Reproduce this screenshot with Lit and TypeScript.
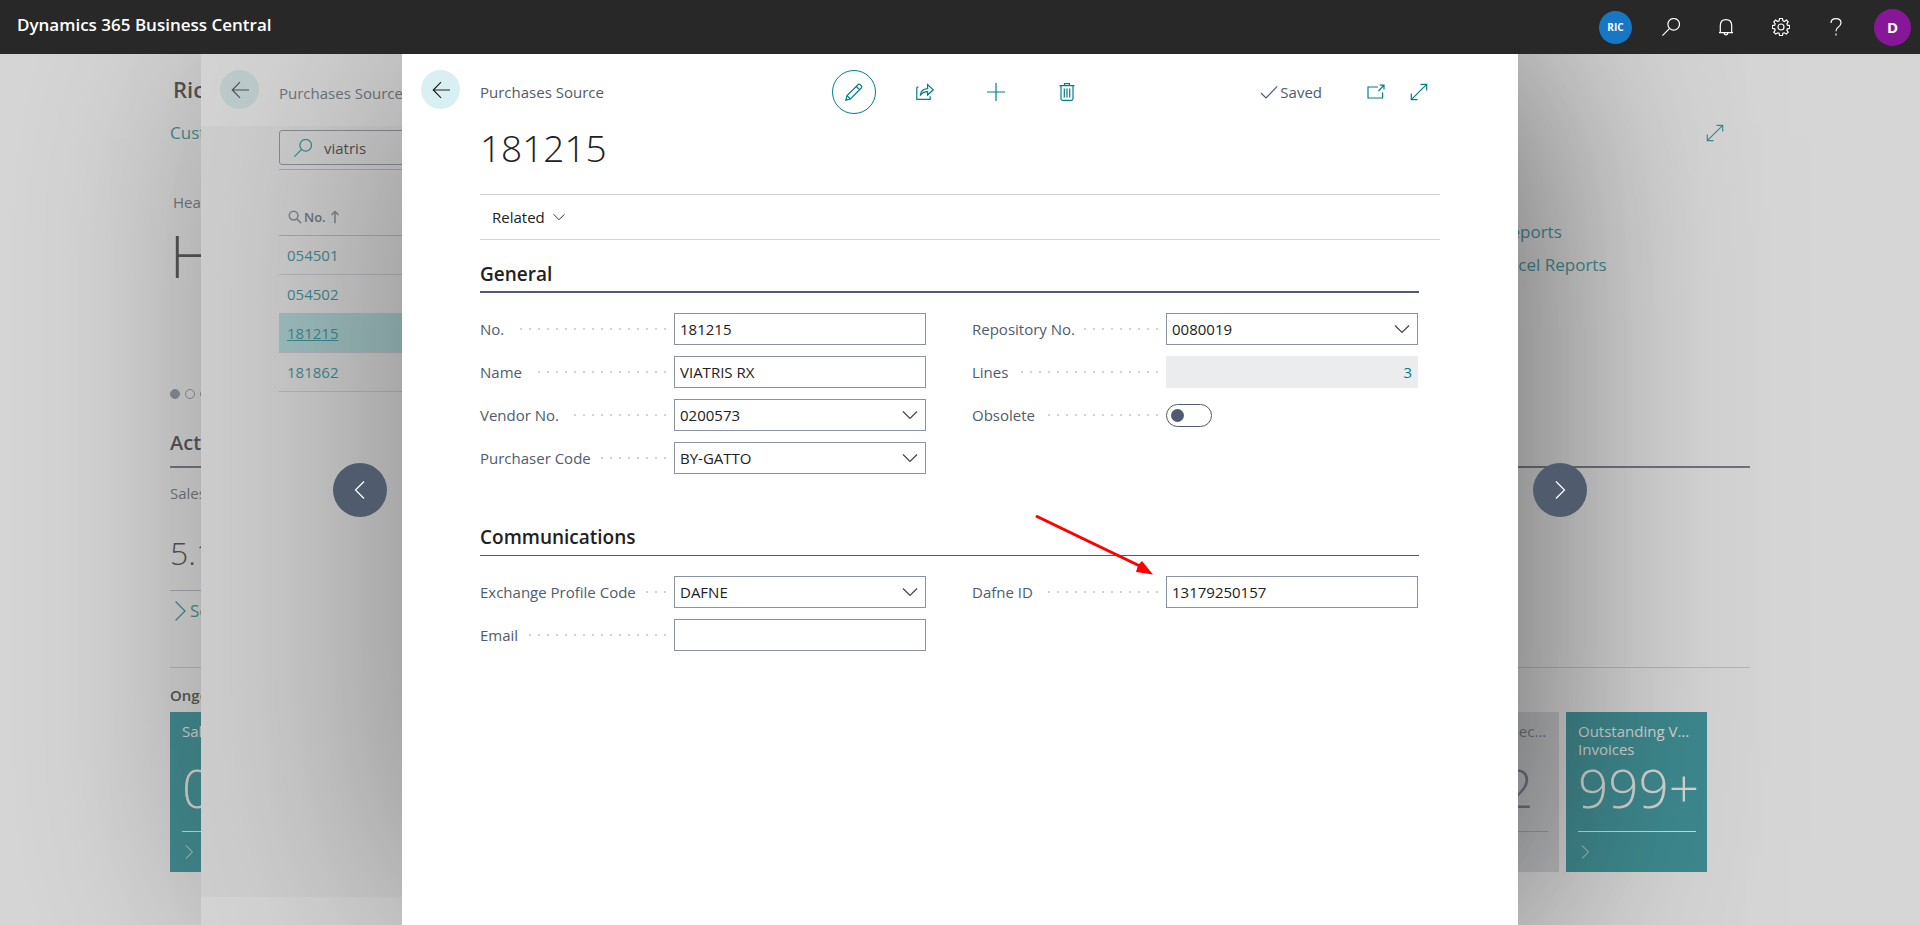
import { LitElement, html, css, svg, nothing, TemplateResult } from "lit";
import { customElement } from "lit/decorators.js";
import { classMap } from "lit/directives/class-map.js";

const glyphs = {
  back: svg`<path d="M18 9H1.5M9 1.2L1.3 9L9 16.8" />`,
  pencil: svg`<path d="M.8 17.2L2 12.6L13 1.8Q14 .7 15.2 1.6L16.4 2.8Q17.3 4 16.200 5L5.400 16ZM2 12.600L5.400 16M11.300 3.500L14.500 6.700" />`,
  share: svg`<path d="M.8 4.200V16.400H14.200V13.200M.8 4.200H2.400M4.200 12.600Q4.800 6 11.600 5.600V1.600L17.200 6.800L11.600 12V8.600Q6.600 8.600 4.200 12.600Z" />`,
  plus: svg`<path d="M9 0V18M0 9H18" />`,
  trash: svg`<path d="M1.5 2.6H16.5M6.5 2.4V.7H11.5V2.4M3 2.8V15.8Q3 17.3 4.5 17.3H13.5Q15 17.3 15 15.8V2.8M6.3 5.5V14.5M9 5.5V14.5M11.7 5.5V14.5" />`,
  check: svg`<path d="M1 10L6 15L17.2 3.4" />`,
  popout: svg`<path d="M11 4H1V15H15.6V9.5M11.5 8L17 2.2M12.6 2.2H17V6.4" />`,
  expand: svg`<path d="M1.3 16.7L16.7 1.3M10.5 1.3H16.7V7.5M1.3 10.5V16.7H7.5" />`,
  search: svg`<circle cx="11.7" cy="6.3" r="5.8" /><path d="M7.6 10.4L.4 17.6" />`,
  find: svg`<circle cx="7.2" cy="7.2" r="5.6" /><path d="M11.4 11.4L17 17" />`,
  bell: svg`<path d="M2 14.6H16M3.3 14.4V7.4Q3.5 1.6 9 1.6Q14.5 1.6 14.7 7.4V14.4M7 14.8Q7.2 16.8 9 16.8Q10.8 16.8 11 14.8" />`,
  gear: svg`<path d="M7.6 .4H10.4L10.9 2.9L12.4 3.5L14.5 2.1L16.2 3.8L14.9 5.9L15.4 7.2L17.7 7.6V10.3L15.4 10.8L14.8 12.2L16.2 14.2L14.3 16.1L12.3 14.8L10.9 15.3L10.4 17.6H7.6L7.1 15.3L5.800 14.800L3.700 16.100L1.800 14.200L3.200 12.200L2.700 10.800L.300 10.300V7.600L2.700 7.200L3.200 5.900L1.800 3.800L3.600 2.100L5.700 3.500L7.100 2.900Z" /><circle cx="9" cy="9" r="3" />`,
  help: svg`<path d="M4 5Q4 .7 9 .7Q14 .7 14 4.8Q14 7.4 11.2 9.2Q9 10.6 9 13.2M9 15.6V17.6" />`,
  down: svg`<path d="M2 5.5L9 12.5L16 5.5" />`,
  up: svg`<path d="M9 17V2M4.500 6.500L9 2L13.500 6.500" />`,
  left: svg`<path d="M13 .5L4.5 9L13 17.5" />`,
  right: svg`<path d="M5 .5L13.5 9L5 17.5" />`,
};

type GlyphName = keyof typeof glyphs;

const icon = (name: GlyphName, size = "") => html`
  <svg class="icon ${size}" viewBox="0 0 18 18" aria-hidden="true">${glyphs[name]}</svg>
`;

interface Field {
  id: string;
  label: string;
  kind: "text" | "lookup" | "readonly" | "toggle";
  value?: string;
  marked?: boolean;
}

const general: Field[][] = [
  [
    { id: "no", label: "No.", kind: "text", value: "181215" },
    { id: "name", label: "Name", kind: "text", value: "VIATRIS RX" },
    { id: "vendor", label: "Vendor No.", kind: "lookup", value: "0200573" },
    { id: "purchaser", label: "Purchaser Code", kind: "lookup", value: "BY-GATTO" },
  ],
  [
    { id: "repository", label: "Repository No.", kind: "lookup", value: "0080019" },
    { id: "lines", label: "Lines", kind: "readonly", value: "3" },
    { id: "obsolete", label: "Obsolete", kind: "toggle" },
  ],
];

const communications: Field[][] = [
  [
    { id: "profile", label: "Exchange Profile Code", kind: "lookup", value: "DAFNE" },
    { id: "email", label: "Email", kind: "text", value: "" },
  ],
  [{ id: "dafne", label: "Dafne ID", kind: "text", value: "13179250157", marked: true }],
];

const sources = ["054501", "054502", "181215", "181862"];

@customElement("app-root")
export class AppRoot extends LitElement {
  static styles = css`
    :host {
      display: flex;
      flex-direction: column;
      height: 100vh;
      overflow: hidden;
      font: 15px/20px "Open Sans", "Noto Sans", sans-serif;
      color: #212121;
      --teal: #008089;
      --slate: #505c6d;
    }
    * { box-sizing: border-box; }
    h1, h2, h3, p { margin: 0; font-weight: inherit; font-size: inherit; }
    button { border: 0; padding: 0; background: none; font: inherit; color: inherit; cursor: pointer; }
    a { color: var(--teal); text-decoration: none; }
    .icon { display: block; width: 18px; height: 18px; fill: none; stroke: currentColor; stroke-width: 1.2; flex: none; }
    .icon.small { width: 14px; height: 14px; }
    .icon.large { width: 20px; height: 20px; }

    .topbar {
      flex: none;
      display: flex;
      align-items: center;
      justify-content: space-between;
      height: 54px;
      padding: 0 9px 0 17px;
      background: #282828;
      color: #fff;
    }
    .product { font-size: 17px; line-height: 24px; font-weight: 600; padding-bottom: 4px; }
    .tools { display: flex; align-items: center; }
    .tool { display: grid; place-items: center; width: 55px; height: 54px; }
    .badge { display: grid; place-items: center; border-radius: 50%; font-weight: 700; }
    .company { width: 33px; height: 33px; background: #1777c4; font-size: 10px; }
    .user { width: 37px; height: 37px; margin-left: 11px; background: #881798; font-size: 15px; }

    .stage { position: relative; flex: 1; min-height: 0; overflow: hidden; background: #fff; }

    .home { width: 1580px; max-width: 100%; margin: 0 auto; padding-top: 20px; }
    .home-title { font-size: 22px; line-height: 30px; font-weight: 600; padding-left: 3px; }
    .home-nav { display: flex; justify-content: space-between; align-items: center; margin-top: 17px; padding-right: 26px; color: var(--teal); }
    .home-nav a, .home-links a { font-size: 17px; line-height: 24px; }
    .hero { display: grid; grid-template-columns: 1fr 250px; margin-top: 47px; }
    .caption { color: var(--slate); }
    .headline { padding-left: 3px; }
    .greeting { font-size: 58px; line-height: 60px; font-weight: 300; margin: 14px 0 0 -3px; }
    .pager { display: flex; gap: 5px; margin-top: 103px; }
    .dot { width: 10px; height: 10px; border: 1px solid #7c8694; border-radius: 50%; }
    .dot.current { background: #7c8694; }
    .home-links { display: flex; flex-direction: column; gap: 9px; padding-top: 28px; }
    .activities { margin-top: 30px; padding-bottom: 9px; border-bottom: 2px solid var(--slate); font-size: 20px; line-height: 28px; font-weight: 600; }
    .kpi { width: 300px; margin-top: 15px; }
    .kpi-value { margin-top: 26px; font-size: 32px; line-height: 48px; font-weight: 300; }
    .kpi-more { display: flex; align-items: center; margin-top: 13px; padding-top: 8px; border-top: 1px solid #a8adb5; font-size: 17px; line-height: 24px; }
    .cue-title { font-weight: 600; line-height: 20px; }
    .ongoing { margin-top: 44px; border-top: 1px solid #c8cbd0; padding-top: 17px; }
    .later { margin-top: 47px; }
    .tiles { display: flex; justify-content: space-between; margin-top: 7px; padding-right: 43px; }
    .tile-group { display: flex; gap: 7px; }
    .tile { display: block; width: 141px; height: 160px; padding: 10px 11px 0 12px; background: var(--teal); color: #fff; }
    .tile.muted { background: #d4d6da; color: var(--slate); }
    .tile-label { height: 36px; line-height: 18px; white-space: pre; }
    .tile-value { font-size: 53px; line-height: 60px; font-weight: 300; white-space: nowrap; }
    .tile-foot { margin-top: 13px; padding-top: 13px; border-top: 1px solid currentColor; }
    .muted .tile-foot { border-color: #9a9ea5; }

    .list { position: absolute; inset: 0 calc(50% - 558px) 0 calc(50% - 759px); background: #fff; box-shadow: 0 0 200px rgba(0, 0, 0, 0.36); }
    .list-head { display: flex; height: 72px; padding: 16px 19px 0; gap: 20px; }
    .back { display: grid; place-items: center; flex: none; width: 39px; height: 39px; border-radius: 50%; background: #d9f0f2; }
    .page-name { color: var(--slate); padding-top: 13px; white-space: nowrap; }
    .list-body { height: calc(100% - 100px); padding: 4px 0 0 78px; background: #f5f5f5; }
    .searchbox { display: flex; align-items: center; gap: 12px; width: 300px; height: 35px; padding-left: 14px; border: 1px solid #7c8694; border-radius: 3px; color: var(--teal); }
    .searchbox input { border: 0; padding: 0; outline: 0; background: none; font: inherit; color: #212121; }
    .list-table { width: 100%; margin-top: 4px; border-top: 1px solid #b4b8be; border-collapse: collapse; }
    .list-table th { height: 66px; padding: 28px 0 0 9px; border-bottom: 1px solid #b4b8be; font-size: 13px; font-weight: 600; color: var(--slate); }
    .sort { display: flex; align-items: center; gap: 2px; }
    .sort .icon { opacity: 0.8; stroke-width: 2; }
    .list-table td { height: 39px; padding: 0 8px; border-bottom: 1px solid #c8cbd0; }
    .current td { background: #a6dcde; }
    .current a { text-decoration: underline; }

    .scrim { position: absolute; inset: 0; background: rgba(152, 152, 152, 0.4); }

    .card {
      position: absolute;
      inset: 0 calc(50% - 558px);
      padding: 0 78px;
      background: #fff;
      box-shadow: 0 0 240px rgba(0, 0, 0, 0.38);
    }
    .card-back { position: absolute; left: 19px; top: 16px; }
    .card-bar { display: grid; grid-template-columns: 1fr auto 1fr; align-items: center; height: 76px; }
    .actions { display: flex; gap: 27px; color: var(--teal); }
    .action { display: grid; place-items: center; width: 44px; height: 44px; border-radius: 50%; }
    .action.active { border: 1px solid var(--teal); }
    .status { display: flex; align-items: center; justify-content: flex-end; padding-right: 12px; color: var(--teal); }
    .saved { display: flex; align-items: center; gap: 2px; margin-right: 45px; color: var(--slate); }
    .status-tools { display: flex; gap: 25px; }
    .record { height: 64px; font-size: 37px; line-height: 36px; font-weight: 300; }
    .menu { display: flex; align-items: center; height: 46px; padding-left: 12px; border: solid #d0d3d8; border-width: 1px 0; }
    .menu-item { display: flex; align-items: center; gap: 7px; }
    .section { margin-right: 21px; padding-top: 21px; }
    .section-title { height: 32px; font-size: 19px; line-height: 27px; font-weight: 600; border-bottom: 2px solid var(--slate); }
    .section + .section { padding-top: 50px; }
    .section + .section .section-title { border-bottom-width: 1px; }
    .columns { display: grid; grid-template-columns: 1fr 1fr; gap: 46px; padding: 20px 1px 0 0; }
    .fields { display: grid; gap: 11px; align-content: start; }
    .field { display: grid; grid-template-columns: 194px 1fr; align-items: center; height: 32px; }
    .label { display: flex; align-items: center; color: var(--slate); white-space: nowrap; padding-right: 8px; }
    .leader {
      flex: 1;
      height: 2px;
      margin-left: 9px;
      background: repeating-linear-gradient(to left, #d0d1d4 0 2px, transparent 2px 9px);
    }
    .control { position: relative; display: grid; align-items: center; height: 32px; }
    .box { grid-area: 1 / 1; width: 100%; height: 32px; margin: 0; padding: 0 5px; border: 1px solid #8b93a0; border-radius: 0; outline: 0; background: #fff; font: inherit; color: #212121; appearance: none; }
    .box.readonly { border-color: #ebecee; background: #ebecee; color: var(--teal); text-align: right; }
    .chevron { grid-area: 1 / 1; justify-self: end; padding-right: 7px; color: #444; pointer-events: none; }
    .toggle { display: flex; align-items: center; width: 46px; height: 23px; margin: 0; padding: 0 4px; appearance: none; border: 1px solid var(--slate); border-radius: 12px; background: #fff; }
    .toggle::before { content: ""; width: 13px; height: 13px; border-radius: 50%; background: var(--slate); }
    .toggle:checked { justify-content: flex-end; }
    .pointer { position: absolute; left: -131px; top: -61px; width: 118px; height: 60px; fill: #f00; pointer-events: none; }

    .step { position: absolute; top: calc(50% - 27px); display: grid; place-items: center; width: 54px; height: 54px; border-radius: 50%; background: var(--slate); color: #fff; }
    .previous { left: calc(50% - 627px); }
    .next { right: calc(50% - 627px); }
  `;

  private renderTopbar() {
    const tools: [GlyphName, string][] = [
      ["search", "Search"],
      ["bell", "Notifications"],
      ["gear", "Settings"],
      ["help", "Help"],
    ];
    return html`
      <header class="topbar">
        <span class="product">Dynamics 365 Business Central</span>
        <div class="tools">
          <button class="tool"><span class="badge company">RIC</span></button>
          ${tools.map(([name, label]) => html`<button class="tool" aria-label=${label}>${icon(name)}</button>`)}
          <button class="badge user">D</button>
        </div>
      </header>
    `;
  }

  private renderTile(label: string, value: string, muted = false) {
    return html`
      <a href="#" class=${classMap({ tile: true, muted })}>
        <div class="tile-label">${label}</div>
        <div class="tile-value">${value}</div>
        <div class="tile-foot">${icon("right", "small")}</div>
      </a>
    `;
  }

  private renderHome() {
    return html`
      <div class="home">
        <h1 class="home-title">Ric</h1>
        <nav class="home-nav">
          <a href="#">Customers</a>
          <button aria-label="Expand">${icon("expand")}</button>
        </nav>
        <div class="hero">
          <div>
            <p class="caption headline">Headline</p>
            <p class="greeting headline">Hi!</p>
            <div class="pager"><i class="dot current"></i><i class="dot"></i><i class="dot"></i></div>
          </div>
          <div class="home-links">
            <a href="#">Reports</a>
            <a href="#">Excel Reports</a>
          </div>
        </div>
        <h2 class="activities">Activities</h2>
        <div class="kpi">
          <p class="caption">Sales This Month</p>
          <p class="kpi-value">5.1</p>
          <a href="#" class="kpi-more">${icon("right", "large")}See more</a>
        </div>
        <div class="ongoing">
          <h3 class="cue-title">Ongoing Sales</h3>
          <div class="tiles">
            ${this.renderTile("Sales Quotes", "0")}
            <div class="tile-group">
              ${this.renderTile("Outgoing Selec...", "1.12", true)}
              ${this.renderTile("Outstanding V...\nInvoices", "999+")}
            </div>
          </div>
        </div>
        <h3 class="cue-title later">Incoming Documents</h3>
      </div>
    `;
  }

  private renderList() {
    return html`
      <section class="list" aria-label="Purchases Source list">
        <div class="list-head">
          <button class="back" aria-label="Back">${icon("back")}</button>
          <span class="page-name">Purchases Source</span>
        </div>
        <div class="list-body">
          <label class="searchbox">${icon("search")}<input aria-label="Search" .value=${"viatris"} /></label>
          <table class="list-table">
            <thead>
              <tr><th><span class="sort">${icon("find", "small")}No.${icon("up", "small")}</span></th></tr>
            </thead>
            <tbody>
              ${sources.map(
                (no) => html`<tr class=${classMap({ current: no === "181215" })}><td><a href="#">${no}</a></td></tr>`
              )}
            </tbody>
          </table>
        </div>
      </section>
    `;
  }

  private renderControl(f: Field): TemplateResult {
    switch (f.kind) {
      case "lookup":
        return html`
          <select class="box" id=${f.id}><option>${f.value}</option></select>
          <span class="chevron">${icon("down")}</span>
        `;
      case "toggle":
        return html`<input class="toggle" type="checkbox" role="switch" id=${f.id} />`;
      case "readonly":
        return html`<input class="box readonly" readonly id=${f.id} .value=${f.value ?? ""} />`;
      default:
        return html`<input class="box" id=${f.id} .value=${f.value ?? ""} />`;
    }
  }

  private renderSection(title: string, columns: Field[][]) {
    return html`
      <section class="section">
        <h2 class="section-title">${title}</h2>
        <div class="columns">
          ${columns.map(
            (fields) => html`
              <div class="fields">
                ${fields.map(
                  (f) => html`
                    <div class="field">
                      <label class="label" for=${f.id}>${f.label}<span class="leader"></span></label>
                      <div class="control">
                        ${this.renderControl(f)}
                        ${f.marked
                          ? html`<svg class="pointer" viewBox="0 0 118 60" aria-hidden="true">
                              <path d="M.3 2.200L1.600 -.300L104 49L107 46L118 59.500L101 57L102.600 51.500Z" />
                            </svg>`
                          : nothing}
                      </div>
                    </div>
                  `
                )}
              </div>
            `
          )}
        </div>
      </section>
    `;
  }

  private renderCard() {
    return html`
      <main class="card">
        <button class="back card-back" aria-label="Back">${icon("back")}</button>
        <div class="card-bar">
          <span class="caption">Purchases Source</span>
          <div class="actions">
            <button class="action active" aria-label="Edit">${icon("pencil")}</button>
            <button class="action" aria-label="Share">${icon("share")}</button>
            <button class="action" aria-label="New">${icon("plus")}</button>
            <button class="action" aria-label="Delete">${icon("trash")}</button>
          </div>
          <div class="status">
            <span class="saved">${icon("check")}Saved</span>
            <div class="status-tools">
              <button aria-label="Open in new window">${icon("popout")}</button>
              <button aria-label="Expand">${icon("expand")}</button>
            </div>
          </div>
        </div>
        <h1 class="record">181215</h1>
        <nav class="menu"><button class="menu-item">Related ${icon("down", "small")}</button></nav>
        ${this.renderSection("General", general)} ${this.renderSection("Communications", communications)}
      </main>
    `;
  }

  render() {
    return html`
      ${this.renderTopbar()}
      <div class="stage">
        ${this.renderHome()} ${this.renderList()}
        <div class="scrim"></div>
        ${this.renderCard()}
        <button class="step previous" aria-label="Previous record">${icon("left")}</button>
        <button class="step next" aria-label="Next record">${icon("right")}</button>
      </div>
    `;
  }
}
